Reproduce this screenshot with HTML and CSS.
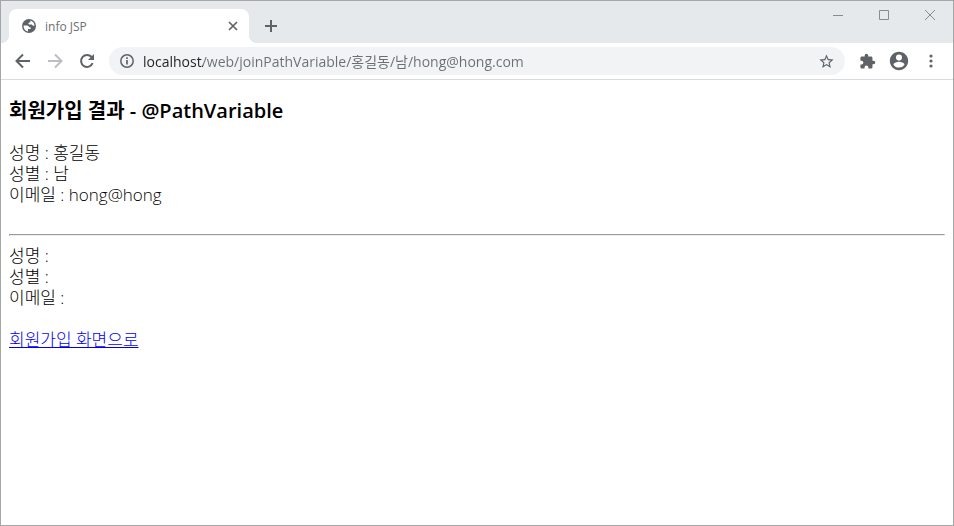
FILE: index.html
```
<!DOCTYPE html>
<html lang="ko">
<head>
    <meta charset="UTF-8">
    <meta name="viewport" content="width=device-width, initial-scale=1.0">
    <title>info JSP</title>
    <link rel="stylesheet" href="styles.css">
</head>
<body>
<div class="window">
    <header class="titlebar">
        <div class="tab">
            <svg class="favicon" viewBox="0 0 16 16" width="16" height="16">
                <circle cx="8" cy="8" r="7" fill="#5f6368"/>
                <path d="M2.6 7.6h3.2c1.7 0 2.1.8 2.1 1.7h1.7v1.8H7v2.4c-2.6-.2-4.6-2.700-4.400-5.900zM9.300 2.600c2.300.5 4.100 2.600 4.200 5.200h-1.300c-.6 0-1-.5-1.200-1.200H8.300c-1 0-1.300-1.700-.2-2.100l1.300-.3z" fill="#fff"/>
            </svg>
            <span class="tab-title">info JSP</span>
            <button class="tab-close" aria-label="탭 닫기">
                <svg viewBox="0 0 10 10" width="10" height="10"><path d="M1 1l8 8M9 1L1 9" stroke="#5f6368" stroke-width="1.7"/></svg>
            </button>
        </div>
        <button class="new-tab" aria-label="새 탭">
            <svg viewBox="0 0 12 12" width="12" height="12"><path d="M6 0v12M0 6h12" stroke="#5f6368" stroke-width="2"/></svg>
        </button>
        <div class="window-buttons">
            <button aria-label="최소화"><svg viewBox="0 0 12 12" width="12" height="12"><path d="M1 6.500h10" stroke="#888b8f"/></svg></button>
            <button aria-label="최대화"><svg viewBox="0 0 12 12" width="12" height="12"><path d="M1.500 1.500h9v9h-9z" fill="none" stroke="#888b8f"/></svg></button>
            <button aria-label="닫기"><svg viewBox="0 0 12 12" width="12" height="12"><path d="M1 1l10 10M11 1L1 11" stroke="#888b8f"/></svg></button>
        </div>
    </header>

    <nav class="toolbar">
        <button aria-label="뒤로"><svg viewBox="0 0 16 16" width="16" height="16"><path d="M15 8H2M8 1.500L1.500 8 8 14.500" fill="none" stroke="#5f6368" stroke-width="2"/></svg></button>
        <button aria-label="앞으로" disabled><svg viewBox="0 0 16 16" width="16" height="16"><path d="M1 8h13M8 1.500L14.500 8 8 14.500" fill="none" stroke="#bcbec1" stroke-width="2"/></svg></button>
        <button aria-label="새로고침"><svg viewBox="0 0 16 16" width="16" height="16"><path d="M13.600 10.200A6 6 0 1 1 12.600 4" fill="none" stroke="#5f6368" stroke-width="2"/><path d="M15 1v6H9z" fill="#5f6368"/></svg></button>
        <div class="address">
            <svg viewBox="0 0 16 16" width="16" height="16"><circle cx="8" cy="8" r="6.200" fill="none" stroke="#5f6368" stroke-width="1.500"/><path d="M8 7v4.500M8 4.300v1.700" stroke="#5f6368" stroke-width="1.700"/></svg>
            <input type="text" class="url" aria-label="주소창" value="localhost/web/joinPathVariable/홍길동/남/hong@hong.com">
            <button class="bookmark" aria-label="북마크"><svg viewBox="0 0 24 24" width="17" height="17"><path fill="#5f6368" d="M22 9.240l-7.190-.62L12 2 9.190 8.630 2 9.240l5.460 4.730L5.820 21 12 17.270 18.180 21l-1.630-7.030L22 9.240zM12 15.400l-3.760 2.270 1-4.280-3.320-2.880 4.380-.38L12 6.100l1.710 4.040 4.380.38-3.320 2.880 1 4.280L12 15.400z"/></svg></button>
        </div>
        <button class="extensions" aria-label="확장 프로그램"><svg viewBox="0 0 24 24" width="17" height="17"><path fill="#5f6368" d="M20.500 11H19V7c0-1.100-.9-2-2-2h-4V3.500a2.500 2.500 0 0 0-5 0V5H4c-1.100 0-2 .9-2 2v3.800h1.500a2.700 2.700 0 0 1 0 5.400H2V20c0 1.100.9 2 2 2h3.800v-1.500a2.700 2.700 0 0 1 5.400 0V22H17c1.100 0 2-.9 2-2v-4h1.500a2.500 2.500 0 0 0 0-5z"/></svg></button>
        <button class="profile" aria-label="프로필"><svg viewBox="0 0 24 24" width="22" height="22"><path fill="#5f6368" d="M12 2C6.480 2 2 6.480 2 12s4.480 10 10 10 10-4.480 10-10S17.520 2 12 2zm0 3a3.300 3.300 0 1 1 0 6.600A3.300 3.300 0 0 1 12 5zm0 14.200a7.200 7.200 0 0 1-6-3.220c.03-1.990 4-3.080 6-3.080s5.970 1.090 6 3.080a7.200 7.200 0 0 1-6 3.220z"/></svg></button>
        <button class="more" aria-label="메뉴"><svg viewBox="0 0 4 14" width="4" height="14"><g fill="#5f6368"><circle cx="2" cy="2" r="1.600"/><circle cx="2" cy="7" r="1.600"/><circle cx="2" cy="12" r="1.600"/></g></svg></button>
    </nav>

    <main class="page">
        <h3>회원가입 결과 - @PathVariable</h3>
        성명 : 홍길동<br>
        성별 : 남<br>
        이메일 : hong@hong<br>
        <br>
        <hr>
        성명 : <br>
        성별 : <br>
        이메일 : <br>
        <br>
        <a href="#">회원가입 화면으로</a>
    </main>
</div>
</body>
</html>
```
FILE: styles.css
```
* {
    box-sizing: border-box;
}
body {
    margin: 0;
    font-family: "Open Sans", "Noto Sans CJK KR", sans-serif;
}
button {
    display: flex;
    align-items: center;
    justify-content: center;
    padding: 0;
    border: none;
    background: none;
}
svg {
    display: block;
    flex: none;
}
.window {
    display: flex;
    flex-direction: column;
    min-height: 100vh;
    border: 1px solid #a5a6a8;
    background: #fff;
}

/* tab strip */
.titlebar {
    display: flex;
    align-items: flex-start;
    height: 42px;
    padding-left: 8px;
    background: #e5e9ec;
}
.tab {
    position: relative;
    display: flex;
    align-items: center;
    width: 240px;
    height: 34px;
    margin-top: 8px;
    padding: 0 8px 0 12px;
    border-radius: 8px 8px 0 0;
    background: #fff;
}
.tab::before,
.tab::after {
    content: "";
    position: absolute;
    bottom: 0;
    width: 8px;
    height: 8px;
}
.tab::before {
    right: 100%;
    background: radial-gradient(circle at 0 0, #e5e9ec 8px, #fff 8px);
}
.tab::after {
    left: 100%;
    background: radial-gradient(circle at 100% 0, #e5e9ec 8px, #fff 8px);
}
.tab-title {
    flex: 1;
    margin-left: 8px;
    font-size: 12px;
    color: #6b6f74;
}
.tab-close {
    width: 16px;
    height: 16px;
}
.new-tab {
    width: 28px;
    height: 28px;
    margin: 11px 0 0 8px;
}
.window-buttons {
    display: flex;
    margin-left: auto;
}
.window-buttons button {
    width: 46px;
    height: 28px;
}

/* toolbar */
.toolbar {
    display: flex;
    align-items: center;
    height: 37px;
    padding: 0 6px;
    border-bottom: 1px solid #d9dadc;
}
.toolbar > button {
    width: 32px;
    height: 28px;
}
.address {
    display: flex;
    flex: 1;
    align-items: center;
    height: 28px;
    margin: 0 6px;
    padding: 0 10px;
    border-radius: 14px;
    background: #f1f3f4;
}
.url {
    flex: 1;
    min-width: 0;
    margin-left: 8px;
    padding: 0;
    border: none;
    outline: none;
    font-family: inherit;
    font-size: 14px;
    /* host part is darker than the path */
    color: transparent;
    background: linear-gradient(to right, #202124 60px, #6b6f74 60px);
    -webkit-background-clip: text;
    background-clip: text;
}

/* page */
.page {
    flex: 1;
    padding: 0 8px;
    font-size: 17px;
    font-weight: 300;
    line-height: 21px;
    color: #000;
}
.page h3 {
    margin: 19px 0;
    font-size: 20px;
    font-weight: 600;
    line-height: 24px;
}
.page hr {
    margin: 8px 0 9px;
}
.page a {
    color: #0000ee;
}
```
